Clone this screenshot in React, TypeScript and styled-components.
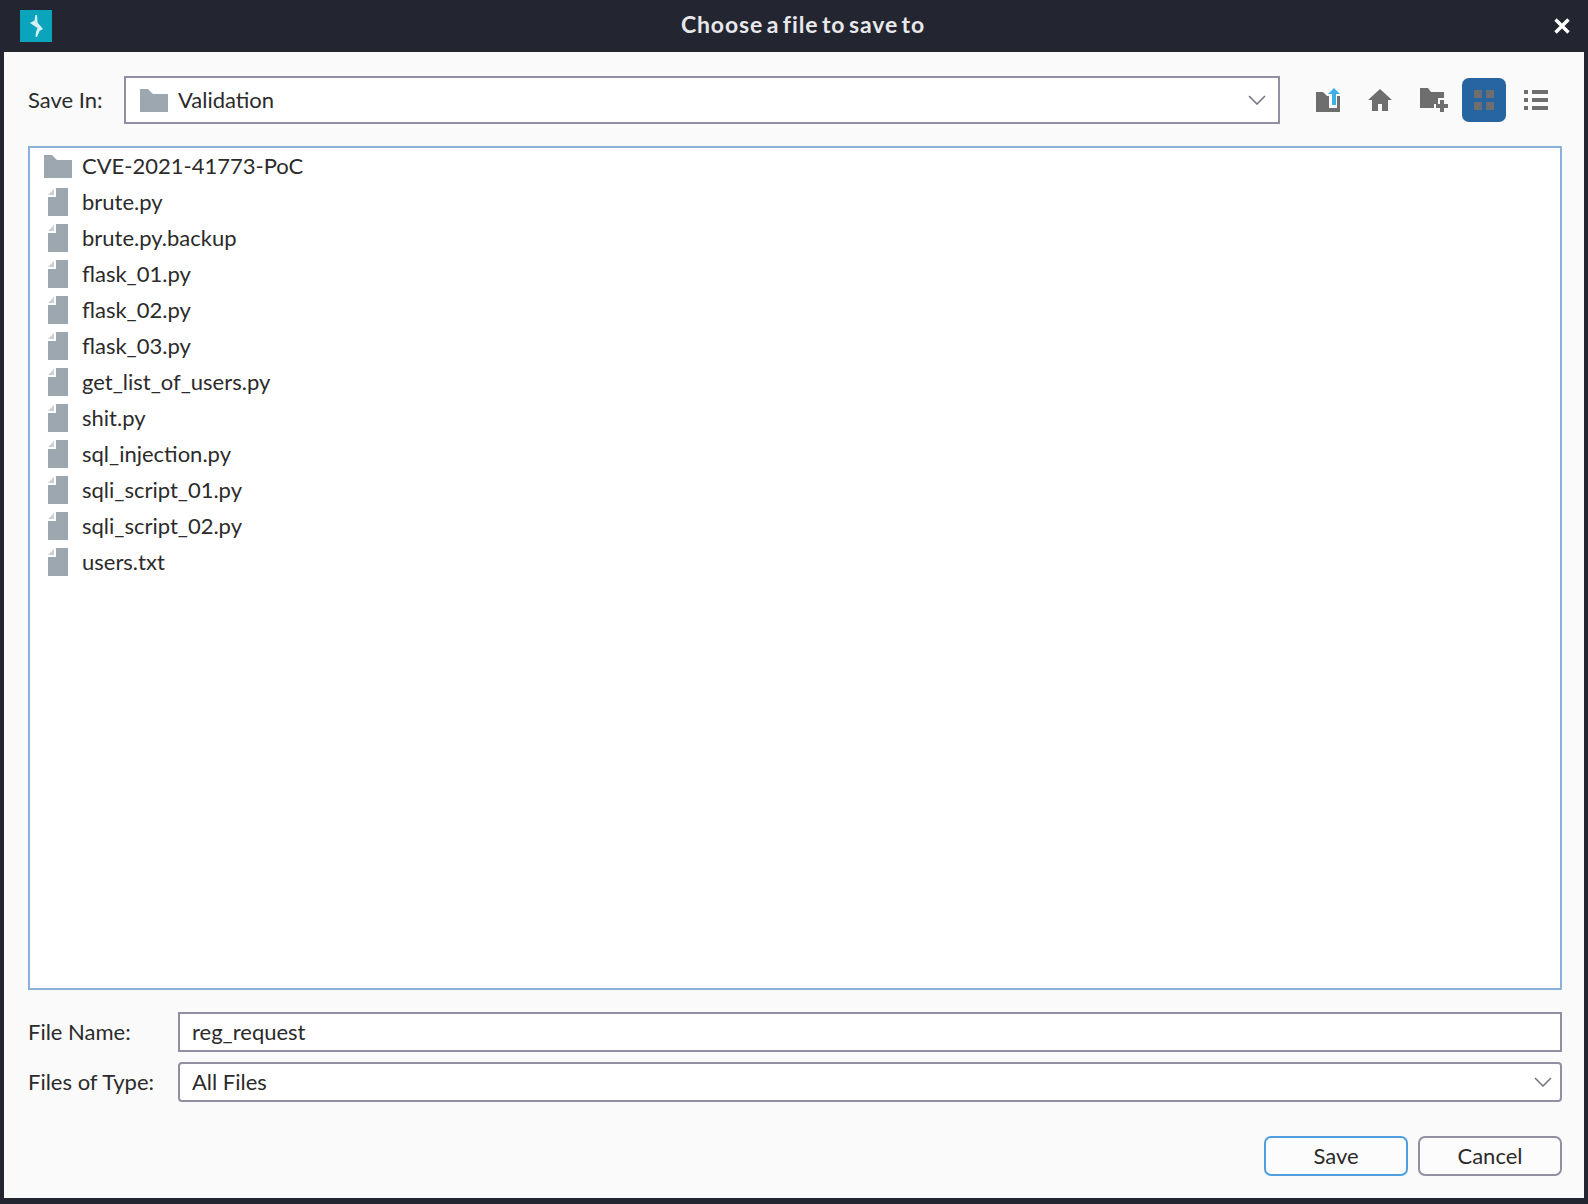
import React from "react"
import styled, { createGlobalStyle } from "styled-components"

const GlobalStyle = createGlobalStyle`
  html, body, #root {
    margin: 0;
    height: 100%;
  }
  body {
    background: #232630;
    font-family: "Lato", "Noto Sans", sans-serif;
    color: #2b2b2b;
    overflow: hidden;
  }
`

const Window = styled.div`
  height: 1204px;
  width: 1588px;
  display: flex;
  flex-direction: column;
  background: #232630;
`

const TitleBar = styled.div`
  height: 52px;
  flex: none;
  display: flex;
  align-items: center;
  padding: 0 18px 0 20px;
  color: #e8e8ea;
`

const Title = styled.div`
  flex: 1;
  text-align: center;
  font-size: 23px;
  font-weight: 700;
  letter-spacing: 0.9px;
  word-spacing: -3px;
  margin-top: -5px;
`

const Body = styled.div`
  flex: 1;
  min-height: 0;
  margin: 0 4px 6px;
  padding: 24px 22px 22px 24px;
  background: #fafafa;
  display: flex;
  flex-direction: column;
`

const Toolbar = styled.div`
  display: flex;
  align-items: center;
  height: 48px;
  flex: none;
  padding-right: 4px;
`

const Label = styled.label`
  font-size: 22px;
  white-space: nowrap;
  padding-bottom: 2px;
`

const SaveInLabel = styled(Label)`
  width: 96px;
  flex: none;
`

const Field = styled.div<{ $rounded?: boolean }>`
  display: flex;
  align-items: center;
  box-sizing: border-box;
  height: 100%;
  min-width: 0;
  background: #ffffff;
  border: 2px solid #928fa3;
  border-radius: ${({ $rounded }) => ($rounded ? "4px" : "0")};
  padding: 0 8px 0 12px;
  font-size: 22px;
`

const LocationField = styled(Field)`
  flex: 1;
  gap: 10px;
  margin-right: 26px;
  padding: 0 12px 0 14px;
`

const FieldText = styled.span`
  flex: 1;
  padding-bottom: 2px;
`

const ToolButtons = styled.div`
  display: flex;
  gap: 8px;
`

const ToolButton = styled.div<{ $active?: boolean }>`
  width: 44px;
  height: 44px;
  display: flex;
  align-items: center;
  justify-content: center;
  border-radius: 7px;
  background: ${({ $active }) => ($active ? "#26659f" : "transparent")};
`

const FileList = styled.div`
  flex: 1;
  min-height: 0;
  margin-top: 22px;
  background: #ffffff;
  border: 2px solid #8ab0dc;
`

const FileRow = styled.div`
  height: 36px;
  display: flex;
  align-items: center;
  gap: 10px;
  padding-left: 14px;
  font-size: 22px;
`

const FileName = styled.span`
  padding-bottom: 2px;
`

const IconSlot = styled.span`
  width: 28px;
  display: flex;
  justify-content: center;
  flex: none;
`

const Form = styled.div`
  display: grid;
  grid-template-columns: 150px 1fr;
  grid-auto-rows: 40px;
  row-gap: 10px;
  align-items: center;
  margin-top: 22px;
  flex: none;
`

const Actions = styled.div`
  display: flex;
  justify-content: flex-end;
  gap: 10px;
  margin-top: 34px;
  flex: none;
`

const Button = styled.div<{ $primary?: boolean }>`
  width: 144px;
  height: 40px;
  box-sizing: border-box;
  display: flex;
  align-items: center;
  justify-content: center;
  padding-bottom: 2px;
  font-size: 22px;
  background: #fcfcfc;
  border: 2px solid ${({ $primary }) => ($primary ? "#4f9fe0" : "#928fa3")};
  border-radius: 7px;
`

const Logo = () => (
  <svg width="32" height="32" viewBox="0 0 32 32" style={{ flex: "none" }}>
    <rect width="32" height="32" fill="#0ba4bd" />
    <path
      d="M15.500 5h1.500l.5 7.500 5.500 6.500-3.500 2-2.500 6h-1.500l.5-5 1.500-4-7.500-5 4.500-2.500z"
      fill="#d5f0f4"
    />
  </svg>
)

const CloseIcon = () => (
  <svg width="16" height="16" viewBox="0 0 16 16" style={{ flex: "none" }}>
    <path d="M1.5 1.5l13 13M14.5 1.500l-13 13" stroke="#fff" strokeWidth="3.4" />
  </svg>
)

const FolderIcon = () => (
  <svg width="28" height="23" viewBox="0 0 28 23" style={{ flex: "none" }}>
    <path d="M0 0h8l5 5h15v18H0z" fill="#9ca7b0" />
  </svg>
)

const FileIcon = () => (
  <svg width="20" height="28" viewBox="0 0 20 28">
    <path d="M8 0h12v28H0V9h8z" fill="#9ca7b0" />
    <path d="M6 1v6H0z" fill="#c9d0d5" />
  </svg>
)

const Chevron = () => (
  <svg width="18" height="10" viewBox="0 0 18 10" style={{ flex: "none" }}>
    <path d="M1 1l8 8 8-8" fill="none" stroke="#77757f" strokeWidth="1.6" />
  </svg>
)

const UpIcon = () => (
  <svg width="24" height="24" viewBox="0 0 24 24">
    <path d="M0 4h7l4 4h2v12h8V8h3v16H0z" fill="#6e6e6e" />
    <path d="M18 0l6 6h-4v11h-4V6h-4z" fill="#3daee9" />
  </svg>
)

const HomeIcon = () => (
  <svg width="24" height="22" viewBox="0 0 24 22">
    <path d="M12 0l12 11h-4v11h-6v-7h-4v7H4V11H0z" fill="#6e6e6e" />
  </svg>
)

const NewFolderIcon = () => (
  <svg width="32" height="24" viewBox="-4 0 32 24">
    <path d="M0 0h8l3 4h13v6h-6v6h-4v4H0z" fill="#6e6e6e" />
    <path d="M20 12h4v4h4v4h-4v4h-4v-4h-4v-4h4z" fill="#6e6e6e" />
  </svg>
)

const GridIcon = () => (
  <svg width="20" height="20" viewBox="0 0 20 20">
    <path d="M0 0h8v8H0zM12 0h8v8h-8zM0 12h8v8H0zM12 12h8v8h-8z" fill="#6e6e6e" />
  </svg>
)

const ListIcon = () => (
  <svg width="24" height="20" viewBox="0 0 24 20">
    <path
      d="M0 0h4v4H0zM8 0h16v4H8zM0 8h4v4H0zM8 8h16v4H8zM0 16h4v4H0zM8 16h16v4H8z"
      fill="#6e6e6e"
    />
  </svg>
)

const files = [
  "brute.py",
  "brute.py.backup",
  "flask_01.py",
  "flask_02.py",
  "flask_03.py",
  "get_list_of_users.py",
  "shit.py",
  "sql_injection.py",
  "sqli_script_01.py",
  "sqli_script_02.py",
  "users.txt",
]

export default function App() {
  return (
    <Window>
      <GlobalStyle />
      <TitleBar>
        <Logo />
        <Title>Choose a file to save to</Title>
        <CloseIcon />
      </TitleBar>
      <Body>
        <Toolbar>
          <SaveInLabel>Save In:</SaveInLabel>
          <LocationField>
            <FolderIcon />
            <FieldText>Validation</FieldText>
            <Chevron />
          </LocationField>
          <ToolButtons>
            <ToolButton><UpIcon /></ToolButton>
            <ToolButton><HomeIcon /></ToolButton>
            <ToolButton><NewFolderIcon /></ToolButton>
            <ToolButton $active><GridIcon /></ToolButton>
            <ToolButton><ListIcon /></ToolButton>
          </ToolButtons>
        </Toolbar>
        <FileList>
          <FileRow>
            <IconSlot><FolderIcon /></IconSlot>
            <FileName>CVE-2021-41773-PoC</FileName>
          </FileRow>
          {files.map((name) => (
            <FileRow key={name}>
              <IconSlot><FileIcon /></IconSlot>
              <FileName>{name}</FileName>
            </FileRow>
          ))}
        </FileList>
        <Form>
          <Label>File Name:</Label>
          <Field><FieldText>reg_request</FieldText></Field>
          <Label>Files of Type:</Label>
          <Field $rounded>
            <FieldText>All Files</FieldText>
            <Chevron />
          </Field>
        </Form>
        <Actions>
          <Button $primary>Save</Button>
          <Button>Cancel</Button>
        </Actions>
      </Body>
    </Window>
  )
}
